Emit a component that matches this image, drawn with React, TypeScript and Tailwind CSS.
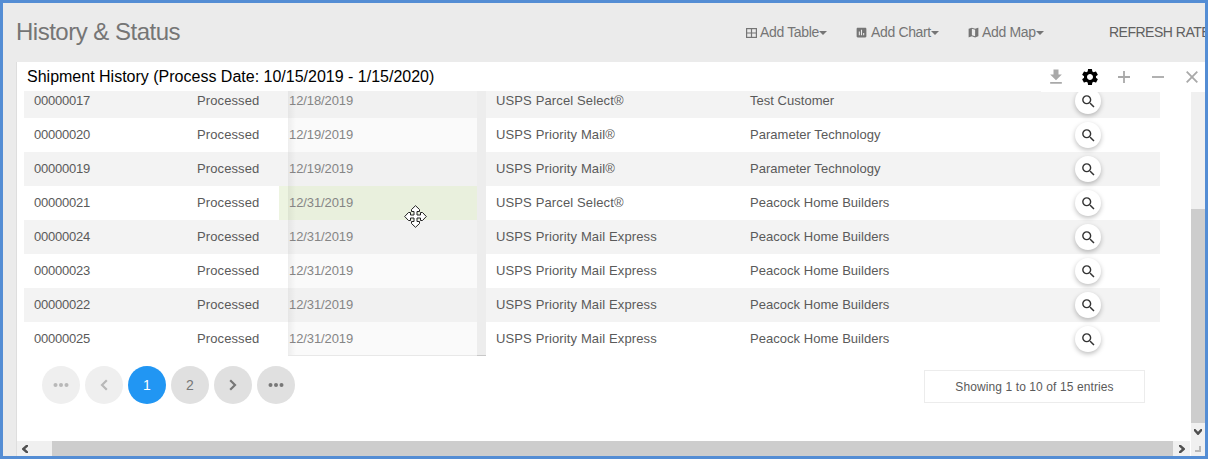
import React from "react";
import { MdFileDownload, MdSettings, MdSearch, MdMap, MdAssessment } from "react-icons/md";

const rows = [
  ["00000017", "12/18/2019", "USPS Parcel Select®", "Test Customer"],
  ["00000020", "12/19/2019", "USPS Priority Mail®", "Parameter Technology"],
  ["00000019", "12/19/2019", "USPS Priority Mail®", "Parameter Technology"],
  ["00000021", "12/31/2019", "USPS Parcel Select®", "Peacock Home Builders"],
  ["00000024", "12/31/2019", "USPS Priority Mail Express", "Peacock Home Builders"],
  ["00000023", "12/31/2019", "USPS Priority Mail Express", "Peacock Home Builders"],
  ["00000022", "12/31/2019", "USPS Priority Mail Express", "Peacock Home Builders"],
  ["00000025", "12/31/2019", "USPS Priority Mail Express", "Peacock Home Builders"],
];

function Caret() {
  return (
    <svg width="8" height="4" viewBox="0 0 8 4" className="mt-px shrink-0">
      <path d="M0 0h8L4 4z" fill="currentColor" />
    </svg>
  );
}

function TableIcon() {
  return (
    <svg width="11" height="10" viewBox="0 0 11 10" fill="none" stroke="currentColor" strokeWidth="1.2" className="shrink-0">
      <rect x="0.6" y="0.6" width="9.8" height="8.8" />
      <path d="M5.5 0v10M0 5h11" />
    </svg>
  );
}

function Dots() {
  return (
    <svg width="16" height="4" viewBox="0 0 16 4" fill="currentColor">
      <circle cx="2.5" cy="2" r="2" />
      <circle cx="8" cy="2" r="2" />
      <circle cx="13.5" cy="2" r="2" />
    </svg>
  );
}

function Chevron({ className = "" }: { className?: string }) {
  return (
    <svg width="8" height="12" viewBox="0 0 8 12" className={className} fill="none" stroke="currentColor" strokeWidth="2.2">
      <path d="M1.2 1.2L6 6L1.2 10.8" />
    </svg>
  );
}

function ScrollArrow({ className = "" }: { className?: string }) {
  return (
    <svg width="6" height="8" viewBox="0 0 6 8" className={className} fill="#505050">
      <path d="M0 0h2l4 3.5v1L2 8H0V6.6L2.8 4L0 1.4z" />
    </svg>
  );
}

function Page({ children, className }: { children: React.ReactNode; className: string }) {
  return (
    <button className={`flex h-[38px] w-[38px] items-center justify-center rounded-full text-[14px] ${className}`}>{children}</button>
  );
}

function MoveCursor() {
  return (
    <svg width="23" height="23" viewBox="0 0 23 23" className="absolute left-[404px] top-[205px]" fill="#fff" stroke="#222" strokeWidth="1">
      <path d="M11.5 .7L15.5 4.5V6.5H13V10H16.5V7.5H18.5L22.3 11.5L18.5 15.5H16.5V13H13V16.5H15.5V18.5L11.5 22.3L7.5 18.5V16.5H10V13H6.5V15.5H4.5L.7 11.5L4.5 7.5H6.5V10H10V6.5H7.5V4.5Z" />
    </svg>
  );
}

export default function App() {
  return (
    <div className="relative flex h-[459px] w-[1208px] flex-col overflow-hidden border-[3px] border-[#548dd4] bg-[#ebebeb] font-['Liberation_Sans',Arial,sans-serif] text-[13px] text-[#5a5a5a]">
      <header className="flex h-[59px] shrink-0 items-center whitespace-nowrap pl-[13px] text-[14px] text-[#757575]">
        <h1 className="-mt-px w-[730px] shrink-0 text-[24px] leading-[56px] tracking-[-0.5px]">History &amp; Status</h1>
        <div className="flex w-[110px] shrink-0 items-center"><TableIcon /><span className="ml-[3px] tracking-[-0.35px]">Add Table</span><Caret /></div>
        <div className="flex w-[112px] shrink-0 items-center"><MdAssessment className="-ml-px h-[13px] w-[13px]" /><span className="ml-[3px] tracking-[-0.35px]">Add Chart</span><Caret /></div>
        <div className="flex w-[141px] shrink-0 items-center"><MdMap className="-ml-px h-[13px] w-[13px]" /><span className="ml-[2px] tracking-[-0.35px]">Add Map</span><Caret /></div>
        <span className="tracking-[-0.5px] text-[#606060]">REFRESH RATE</span>
      </header>
      <main className="ml-[13px] flex h-[394px] shrink-0 flex-col border-l border-[#dedede] bg-white">
        <div className="flex h-[29px] shrink-0 items-center justify-between pl-[10px]">
          <h2 className="whitespace-nowrap text-[16px] text-black">Shipment History (Process Date: 10/15/2019 - 1/15/2020)</h2>
          <div className="relative z-10 flex h-[30px] w-[164px] items-center self-start bg-white text-[#a9a9a9]">
            <MdFileDownload className="ml-[5px] h-[20px] w-[20px] shrink-0" />
            <MdSettings className="ml-[14px] h-[20px] w-[20px] shrink-0 text-black" />
            <svg width="12" height="12" viewBox="0 0 12 12" className="ml-[18px] shrink-0" stroke="currentColor" strokeWidth="1.8"><path d="M6 0v12M0 6h12" /></svg>
            <svg width="12" height="12" viewBox="0 0 12 12" className="ml-[22px] shrink-0" stroke="currentColor" strokeWidth="1.8"><path d="M0 6h12" /></svg>
            <svg width="12" height="12" viewBox="0 0 12 12" className="ml-[22px] shrink-0" stroke="currentColor" strokeWidth="1.8"><path d="M.7 .7l10.6 10.6M11.3 .7L.7 11.3" /></svg>
          </div>
        </div>
        <div className="flex h-[350px] shrink-0">
          <div className="w-[1174px] shrink-0 overflow-hidden pl-[7px]">
            <div className="-mt-[7px] w-[1136px]">
              {rows.map(([id, date, service, customer], i) => (
                <div key={id} className={`flex h-[34px] whitespace-nowrap leading-[34px] ${i % 2 === 0 ? "bg-[#f3f3f3]" : "bg-white"}`}>
                  <div className="w-[173px] pl-[10px] tracking-[-0.22px]">{id}</div>
                  <div className="w-[82px] tracking-[0.1px]">Processed</div>
                  <div className={`w-[9px] ${i === 3 ? "bg-[#edf4e1]" : ""}`} />
                  <div className={`flex w-[198px] justify-between text-[#858585] ${i === 3 ? "bg-[#e9f0dd]" : i % 2 === 0 ? "bg-[#f1f1f1]" : "bg-[#fafafa]"} ${i === 7 ? "border-b border-[#e8e8e8]" : ""}`}>
                    <span className="w-[80px] bg-linear-to-r from-black/5 to-transparent to-10% pl-px tracking-[-0.1px]">{date}</span>
                    <span className={`w-[9px] bg-[#ededed] ${i === 7 ? "-mb-px border-b border-[#c8c8c8]" : ""}`} />
                  </div>
                  <div className="w-[254px] pl-[10px] tracking-[0.13px]">{service}</div>
                  <div className="w-[324px] pl-[10px] tracking-[0.03px]">{customer}</div>
                  <div className="flex items-center pl-[11px]">
                    <button className="flex h-[26px] w-[26px] items-center justify-center rounded-full bg-white text-[#333] shadow-[0_2px_5px_rgba(0,0,0,0.26)]"><MdSearch className="h-[17px] w-[17px]" /></button>
                  </div>
                </div>
              ))}
            </div>
            <div className="flex h-[59px] items-center justify-between pl-[18px] pr-[46px]">
              <div className="-mt-px flex gap-[5px] text-[#777]">
                <Page className="bg-[#efefef] text-[#b8b8b8]"><Dots /></Page>
                <Page className="bg-[#efefef] text-[#b8b8b8]"><Chevron className="rotate-180" /></Page>
                <Page className="bg-[#2196f3] text-white">1</Page>
                <Page className="bg-[#e0e0e0]">2</Page>
                <Page className="bg-[#e0e0e0]"><Chevron /></Page>
                <Page className="bg-[#e0e0e0]"><Dots /></Page>
              </div>
              <div className="mt-[2px] flex h-[33px] w-[221px] items-center justify-center border border-[#ececec] text-[12px] tracking-[0.1px]">Showing 1 to 10 of 15 entries</div>
            </div>
          </div>
          <div className="flex w-[14px] flex-col bg-[#f0f0f0] pt-[118px]">
            <div className="h-[214px] bg-[#cdcdcd]" />
            <div className="flex h-[18px] items-center justify-center"><ScrollArrow className="rotate-90" /></div>
          </div>
        </div>
        <div className="flex h-[15px] shrink-0 bg-[#f0f0f0]">
          <div className="flex w-[35px] items-center pl-[5px]"><ScrollArrow className="rotate-180" /></div>
          <div className="w-[1121px] bg-[#cdcdcd]" />
          <div className="flex w-[17px] items-center pl-[6px]"><ScrollArrow /></div>
          <div className="flex w-[15px] items-center justify-center border-l border-white"><span className="h-[6px] w-[6px] border-b-2 border-r-2 border-[#b8b8b8]" /></div>
        </div>
      </main>
      <div className="absolute left-0 top-0 h-0 w-0"><div className="absolute -left-[3px] -top-[3px]"><MoveCursor /></div></div>
    </div>
  );
}
